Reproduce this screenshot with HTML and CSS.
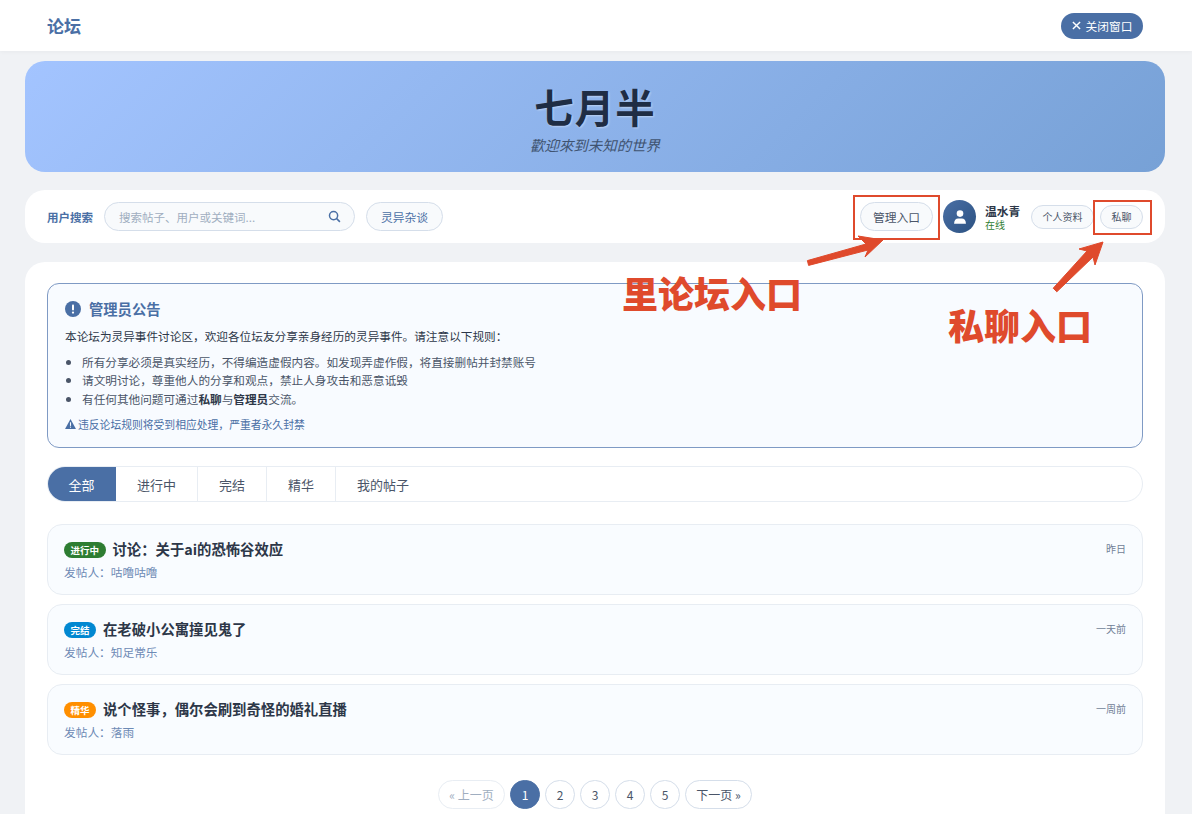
FILE: index.html
```html
<!DOCTYPE html>
<html lang="zh-CN">
<head>
	<meta charset="UTF-8">
	<title>论坛</title>
	<link rel="stylesheet" href="styles.css">
</head>
<body>
<header class="top-bar">
	<div class="top-title">论坛</div>
	<button class="close-btn">
		<svg class="close-icon" viewBox="0 0 10 10"><path d="M1 1 9 9M9 1 1 9"/></svg>
		关闭窗口
	</button>
</header>

<div class="page">
	<section class="hero">
		<h1 class="hero-title">七月半</h1>
		<p class="hero-sub">歡迎來到未知的世界</p>
	</section>

	<section class="toolbar">
		<span class="search-label">用户搜索</span>
		<div class="search-box">
			<span class="search-hint">搜索帖子、用户或关键词...</span>
			<svg class="search-icon" viewBox="0 0 14 14"><circle cx="6" cy="6" r="4.4"/><path d="M9.3 9.3 12.8 12.8"/></svg>
		</div>
		<button class="pill cat-btn">灵异杂谈</button>
		<div class="toolbar-right">
			<button class="pill admin-btn">管理入口</button>
			<div class="avatar">
				<svg viewBox="0 0 14 14"><circle cx="7" cy="4" r="2.9"/><path d="M1.8 13c0-3 1.6-4.6 3.6-4.6h3.2c2 0 3.6 1.6 3.6 4.6z"/></svg>
			</div>
			<div class="user-info">
				<div class="user-name">温水青</div>
				<div class="user-status">在线</div>
			</div>
			<button class="pill small-btn">个人资料</button>
			<button class="pill small-btn chat-btn">私聊</button>
		</div>
	</section>

	<main class="main-card">
		<section class="notice">
			<h2 class="notice-title">
				<svg class="notice-icon" viewBox="0 0 16 16"><circle cx="8" cy="8" r="8"/><rect class="mark" x="7" y="3.4" width="2" height="6" rx=".8"/><circle class="mark" cx="8" cy="11.6" r="1.15"/></svg>
				管理员公告
			</h2>
			<p class="notice-text">本论坛为灵异事件讨论区，欢迎各位坛友分享亲身经历的灵异事件。请注意以下规则：</p>
			<ul class="notice-list">
				<li>所有分享必须是真实经历，不得编造虚假内容。如发现弄虚作假，将直接删帖并封禁账号</li>
				<li>请文明讨论，尊重他人的分享和观点，禁止人身攻击和恶意诋毁</li>
				<li>有任何其他问题可通过<b>私聊</b>与<b>管理员</b>交流。</li>
			</ul>
			<p class="notice-warn">
				<svg class="warn-icon" viewBox="0 0 12 11"><path d="M6 0 12 11H0z"/><rect class="mark" x="5.4" y="3.6" width="1.2" height="4"/><rect class="mark" x="5.4" y="8.4" width="1.2" height="1.2"/></svg>
				违反论坛规则将受到相应处理，严重者永久封禁
			</p>
		</section>

		<nav class="tabs">
			<div class="tab selected">全部</div>
			<div class="tab">进行中</div>
			<div class="tab">完结</div>
			<div class="tab">精华</div>
			<div class="tab">我的帖子</div>
		</nav>

		<div class="post-list">
			<article class="post">
				<div class="post-body">
					<div class="post-title"><span class="tag tag-green">进行中</span>讨论：关于ai的恐怖谷效应</div>
					<div class="post-author">发帖人：咕噜咕噜</div>
				</div>
				<div class="post-time">昨日</div>
			</article>
			<article class="post">
				<div class="post-body">
					<div class="post-title"><span class="tag tag-blue">完结</span>在老破小公寓撞见鬼了</div>
					<div class="post-author">发帖人：知足常乐</div>
				</div>
				<div class="post-time">一天前</div>
			</article>
			<article class="post">
				<div class="post-body">
					<div class="post-title"><span class="tag tag-orange">精华</span>说个怪事，偶尔会刷到奇怪的婚礼直播</div>
					<div class="post-author">发帖人：落雨</div>
				</div>
				<div class="post-time">一周前</div>
			</article>
		</div>

		<div class="pager">
			<span class="page-btn page-wide disabled">« 上一页</span>
			<span class="page-btn current">1</span>
			<span class="page-btn">2</span>
			<span class="page-btn">3</span>
			<span class="page-btn">4</span>
			<span class="page-btn">5</span>
			<span class="page-btn page-wide">下一页 »</span>
		</div>
	</main>
</div>

<!-- 截图上的红色标注 -->
<div class="mark-box box-admin"></div>
<div class="mark-box box-chat"></div>
<svg class="mark-arrows" viewBox="0 0 1192 814">
	<path class="arrow" d="M807.4 260.6 866 244 858 236 883 240 865 257 868 250 808.6 265.4z"/>
	<path class="arrow" d="M1053.2 288.2 1087 251 1079 249 1103 242 1095 265 1093 257 1056.8 291.8z"/>
</svg>
<div class="mark-text text-admin">里论坛入口</div>
<div class="mark-text text-chat">私聊入口</div>
</body>
</html>
```

FILE: styles.css
```css
* {
	margin: 0;
	padding: 0;
	box-sizing: border-box;
}

html, body {
	height: 814px;
	overflow: hidden;
}

body {
	position: relative;
	background: #f0f2f5;
	font-family: "Noto Sans CJK SC", "Liberation Sans", sans-serif;
	color: #2d3748;
	font-size: 12px;
}

button {
	font-family: inherit;
	cursor: pointer;
}

.top-bar {
	height: 51px;
	background: #ffffff;
	box-shadow: 0 1px 4px rgba(0, 0, 0, 0.04);
	display: flex;
	align-items: center;
	justify-content: space-between;
	padding: 0 49px 0 47px;
}

.top-title {
	font-size: 17px;
	font-weight: 700;
	color: #4a6fa5;
}

.close-btn {
	width: 82px;
	height: 26px;
	border: none;
	border-radius: 13px;
	background: #4a6fa5;
	color: #ffffff;
	font-size: 11.7px;
	display: flex;
	align-items: center;
	justify-content: center;
	gap: 5px;
}

.close-icon {
	width: 9px;
	height: 9px;
	stroke: #ffffff;
	stroke-width: 1.6;
	fill: none;
}

.page {
	padding: 10px 27px 0 25px;
}

.hero {
	height: 111px;
	border-radius: 20px;
	background: linear-gradient(135deg, #a3c4ff 0%, #77a1d6 100%);
	text-align: center;
	padding-top: 20px;
}

.hero-title {
	font-size: 39.5px;
	line-height: 50px;
	font-weight: 700;
	color: #1f2d44;
	letter-spacing: 1px;
	text-shadow: 1px 1px 2px rgba(255, 255, 255, 0.4);
}

.hero-sub {
	font-size: 14.45px;
	line-height: 20px;
	font-style: italic;
	color: #3f5370;
	margin-top: 4px;
}

.toolbar {
	height: 53px;
	margin-top: 18px;
	background: #ffffff;
	border-radius: 20px;
	display: flex;
	align-items: center;
	padding: 0 22px;
}

.search-label {
	font-size: 11.5px;
	font-weight: 700;
	color: #4a6fa5;
	margin-right: 11px;
}

.search-box {
	width: 251px;
	height: 29px;
	border: 1px solid #d5deea;
	border-radius: 15px;
	background: #f8fafc;
	display: flex;
	align-items: center;
	justify-content: space-between;
	padding: 0 13px 0 14px;
}

.search-hint {
	font-size: 11.5px;
	color: #a0aec0;
}

.search-icon {
	width: 13px;
	height: 13px;
	fill: none;
	stroke: #4a6fa5;
	stroke-width: 1.6;
}

.pill {
	border: 1px solid #d5deea;
	background: #f8fafc;
	color: #4a5568;
}

.cat-btn {
	width: 77px;
	height: 29px;
	margin-left: 11px;
	border-radius: 15px;
	font-size: 11.8px;
	color: #4a6fa5;
}

.toolbar-right {
	margin-left: auto;
	display: flex;
	align-items: center;
}

.admin-btn {
	width: 73px;
	height: 29px;
	border-radius: 15px;
	font-size: 11.8px;
}

.avatar {
	width: 33px;
	height: 33px;
	margin-left: 10px;
	border-radius: 50%;
	background: linear-gradient(135deg, #4a6fa5, #2c5282);
	display: flex;
	align-items: center;
	justify-content: center;
}

.avatar svg {
	width: 16px;
	height: 16px;
	fill: #ffffff;
}

.user-info {
	margin-left: 9px;
	width: 46px;
}

.user-name {
	font-size: 11.8px;
	line-height: 15px;
	font-weight: 700;
	color: #2d3748;
}

.user-status {
	font-size: 10px;
	line-height: 13px;
	color: #2e7d32;
}

.small-btn {
	width: 63px;
	height: 24px;
	border-radius: 12px;
	font-size: 10px;
}

.chat-btn {
	width: 43px;
	margin-left: 6px;
}

.main-card {
	margin-top: 19px;
	height: 552px;
	background: #ffffff;
	border-radius: 20px 20px 0 0;
	padding: 21px 22px 0;
}

.notice {
	height: 165px;
	border: 1px solid #7f9ac4;
	border-radius: 12px;
	background: #f8fbff;
	padding: 14px 17px;
}

.notice-title {
	display: flex;
	align-items: center;
	gap: 8px;
	font-size: 14.3px;
	line-height: 22px;
	font-weight: 700;
	color: #4a6fa5;
}

.notice-icon {
	width: 16px;
	height: 16px;
	fill: #4a6fa5;
}

.mark {
	fill: #ffffff;
}

.notice-text {
	font-size: 11.65px;
	line-height: 18px;
	margin-top: 7px;
	color: #2d3748;
}

.notice-list {
	margin-top: 8px;
	padding-left: 17px;
	font-size: 11.65px;
	line-height: 18.3px;
	color: #4a5568;
}

.notice-list b {
	color: #2d3748;
}

.notice-warn {
	display: flex;
	align-items: center;
	gap: 2px;
	margin-top: 8px;
	font-size: 10.8px;
	line-height: 16px;
	color: #4a6fa5;
}

.warn-icon {
	width: 11px;
	height: 10px;
	fill: #4a6fa5;
}

.warn-icon .mark {
	fill: #f8fbff;
}

.tabs {
	height: 36px;
	margin-top: 18px;
	border: 1px solid #e8edf3;
	border-radius: 18px;
	display: flex;
	overflow: hidden;
}

.tab {
	display: flex;
	align-items: center;
	justify-content: center;
	padding: 0 21px;
	font-size: 13px;
	color: #4a5568;
	border-right: 1px solid #e8edf3;
}

.tab:last-child {
	border-right: none;
}

.tab.selected {
	margin: -1px 0 -1px -1px;
	width: 69px;
	background: #4a6fa5;
	color: #ffffff;
	border-right: none;
}

.post-list {
	margin-top: 22px;
	display: flex;
	flex-direction: column;
	gap: 9px;
}

.post {
	height: 71px;
	border: 1px solid #e8edf3;
	border-radius: 15px;
	background: #f9fcff;
	display: flex;
	justify-content: space-between;
	padding: 13px 16px 0 16px;
}

.post-title {
	display: flex;
	align-items: center;
	font-size: 14.35px;
	line-height: 22px;
	font-weight: 700;
	color: #2d3748;
}

.tag {
	height: 16px;
	line-height: 16px;
	border-radius: 8px;
	padding: 0 6.5px;
	margin: 2px 7px 0 0;
	font-size: 9.5px;
	font-weight: 700;
	color: #ffffff;
}

.tag-green {
	background: #2e7d32;
}

.tag-blue {
	background: #0288d1;
}

.tag-orange {
	background: #ff8f00;
}

.post-author {
	margin-top: 3px;
	font-size: 11.7px;
	line-height: 18px;
	color: #6d8ab5;
}

.post-time {
	font-size: 10px;
	line-height: 22px;
	color: #718096;
}

.pager {
	margin-top: 25px;
	display: flex;
	justify-content: center;
	gap: 5px;
}

.page-btn {
	width: 30px;
	height: 29px;
	border: 1px solid #d5deea;
	border-radius: 15px;
	background: #ffffff;
	display: flex;
	align-items: center;
	justify-content: center;
	font-size: 12px;
	color: #4a5568;
}

.page-wide {
	width: 67px;
}

.page-btn.disabled {
	color: #a0aec0;
	border-color: #e8edf3;
}

.page-btn.current {
	background: #4a6fa5;
	border-color: #4a6fa5;
	color: #ffffff;
}

.mark-box {
	position: absolute;
	border: 2px solid #df4a2c;
}

.box-admin {
	left: 853px;
	top: 195px;
	width: 87px;
	height: 45px;
}

.box-chat {
	left: 1093px;
	top: 200px;
	width: 59px;
	height: 35px;
}

.mark-arrows {
	position: absolute;
	left: 0;
	top: 0;
	width: 1192px;
	height: 814px;
}

.arrow {
	fill: #df4a2c;
	stroke: #df4a2c;
	stroke-width: 1;
	stroke-linejoin: round;
}

.mark-text {
	position: absolute;
	font-size: 36px;
	line-height: 44px;
	font-weight: 900;
	color: #df4a2c;
	white-space: nowrap;
}

.text-admin {
	left: 622px;
	top: 270px;
}

.text-chat {
	left: 948px;
	top: 302px;
}
```
